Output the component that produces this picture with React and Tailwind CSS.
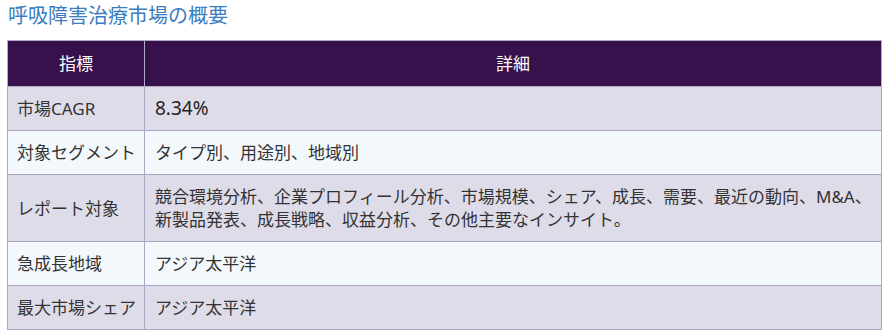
import React from 'react';

const rows = [
  { label: '市場CAGR', value: '8.34%', big: true },
  { label: '対象セグメント', value: 'タイプ別、用途別、地域別' },
  {
    label: 'レポート対象',
    lines: [
      '競合環境分析、企業プロフィール分析、市場規模、シェア、成長、需要、最近の動向、M&A、',
      '新製品発表、成長戦略、収益分析、その他主要なインサイト。',
    ],
  },
  { label: '急成長地域', value: 'アジア太平洋' },
  { label: '最大市場シェア', value: 'アジア太平洋' },
];

const App = () => {
  return (
    <div
      className="w-[888px] h-[334px] bg-white px-[7px] pt-[2px]"
      style={{ fontFamily: '"Noto Sans", "Noto Sans CJK JP", sans-serif' }}
    >
      <h2 className="text-[20px] leading-[28px] text-[#3a7cc0] pl-[1px] mb-[10px]">
        呼吸障害治療市場の概要
      </h2>
      <table className="w-[875px] table-fixed border-collapse text-[#333333] text-[17px] leading-[23px]">
        <thead>
          <tr className="bg-[#36114b] text-white">
            <th className="w-[137px] border border-[#b3a9c9] py-[11px] font-normal text-center">指標</th>
            <th className="border border-[#b3a9c9] py-[11px] font-normal text-center">詳細</th>
          </tr>
        </thead>
        <tbody>
          {rows.map((row, i) => (
            <tr key={row.label} className={i % 2 === 0 ? 'bg-[#dfdcea]' : 'bg-[#f3f8fd]'}>
              <td className="border border-[#aba7c2] pl-[9px] pr-0 py-[10px] whitespace-nowrap">{row.label}</td>
              <td className="border border-[#aba7c2] px-[10px] py-[10px]">
                {row.lines ? (
                  row.lines.map((line) => (
                    <div key={line} className="whitespace-nowrap">{line}</div>
                  ))
                ) : (
                  <span className={row.big ? 'text-[19px] text-[#222222]' : ''}>{row.value}</span>
                )}
              </td>
            </tr>
          ))}
        </tbody>
      </table>
    </div>
  );
};

export default App;
